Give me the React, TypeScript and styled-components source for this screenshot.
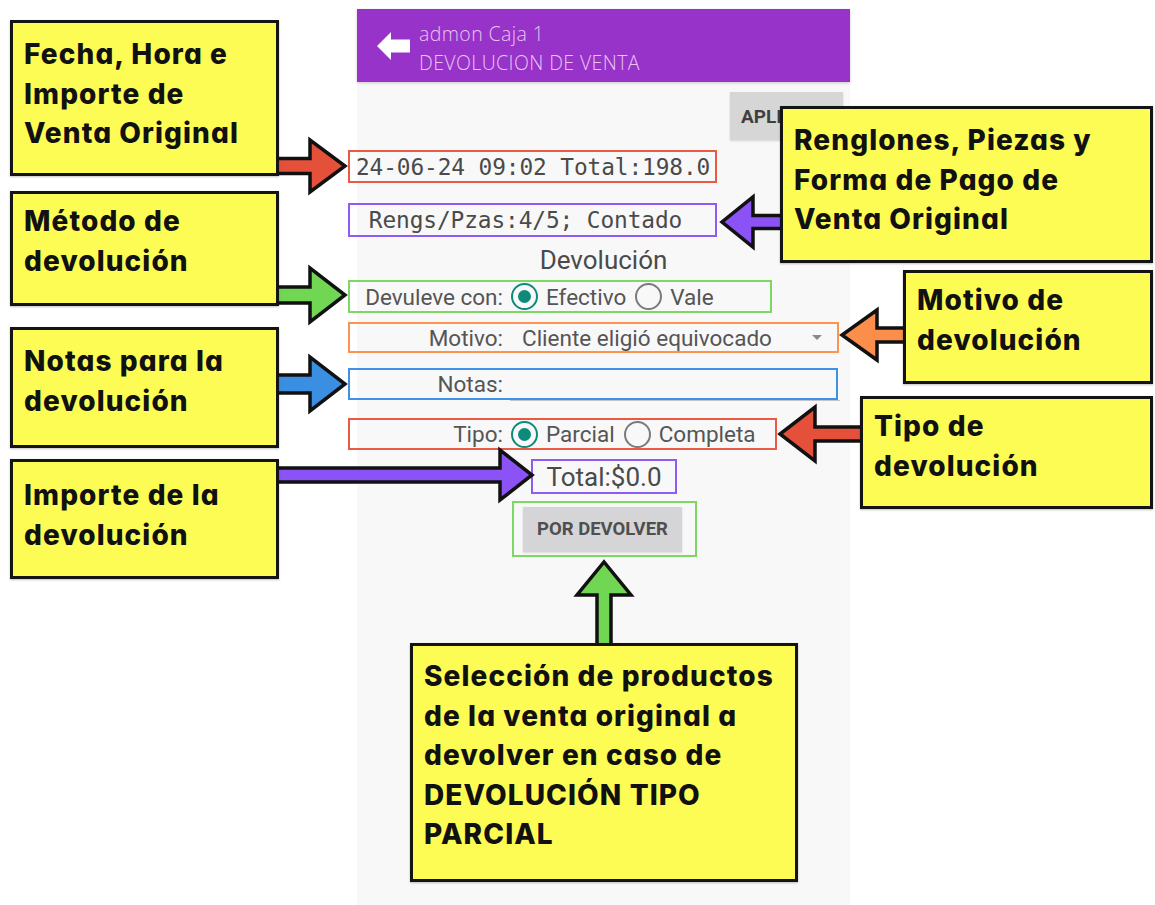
import React from "react";
import styled, { createGlobalStyle } from "styled-components";

const RED = "#e5503a";
const GREEN = "#72d655";
const BLUE = "#3b8fe2";
const PURPLE = "#8b52f6";
const ORANGE = "#fc8e4c";
const TEAL = "#0e8a7b";

const GlobalStyle = createGlobalStyle`
  html, body {
    margin: 0;
    padding: 0;
    background: #ffffff;
  }
`;

const Canvas = styled.div`
  position: relative;
  width: 1155px;
  height: 905px;
  overflow: hidden;
  background: #ffffff;
  font-family: Roboto, "Liberation Sans", sans-serif;
`;

const Phone = styled.div`
  margin-left: 357px;
  margin-top: 9px;
  width: 493px;
  height: 896px;
  background: #f8f8f8;
  display: flex;
  flex-direction: column;
  align-items: flex-start;
`;

const AppBar = styled.header`
  box-sizing: border-box;
  width: 100%;
  height: 73px;
  flex-shrink: 0;
  background: #9733c9;
  display: flex;
  align-items: center;
  padding-left: 20px;
  gap: 8px;
  box-shadow: 0 1px 3px rgba(0, 0, 0, 0.2);
`;

const BarTitles = styled.div`
  display: flex;
  flex-direction: column;
  padding-top: 4px;
  color: #eac3f1;
  font-family: "Open Sans", "Noto Sans", sans-serif;
  font-weight: 300;
  font-size: 19.5px;
  letter-spacing: 0.4px;
  line-height: 29px;
`;

const ApplyButton = styled.button`
  box-sizing: border-box;
  margin-left: 373px;
  margin-top: 10px;
  width: 113px;
  height: 48px;
  border: none;
  background: #d6d6d7;
  color: #3f3f3f;
  font-family: Roboto, sans-serif;
  font-weight: 700;
  font-size: 19px;
  text-align: left;
  padding-left: 11px;
  box-shadow: 0 1px 2px rgba(0, 0, 0, 0.15);
`;

const Frame = styled.div<{ $color: string; $x: number; $w: number; $h: number; $mt: number; $center?: boolean }>`
  box-sizing: border-box;
  margin-left: ${(p) => p.$x}px;
  margin-top: ${(p) => p.$mt}px;
  width: ${(p) => p.$w}px;
  height: ${(p) => p.$h}px;
  border: 2px solid ${(p) => p.$color};
  display: flex;
  align-items: center;
  justify-content: ${(p) => (p.$center ? "center" : "flex-start")};
  color: #555555;
`;

const MonoText = styled.span<{ $pl?: number; $pr?: number }>`
  font-family: "DejaVu Sans Mono", "Liberation Mono", monospace;
  font-size: 22.8px;
  letter-spacing: -0.1px;
  color: #4a4a4a;
  padding-left: ${(p) => p.$pl ?? 0}px;
  padding-right: ${(p) => p.$pr ?? 0}px;
  white-space: nowrap;
`;

const SectionTitle = styled.div`
  align-self: stretch;
  margin-top: 10px;
  text-align: center;
  font-size: 26px;
  line-height: 26px;
  color: #4a4a4a;
`;

const Label = styled.span`
  width: 153px;
  flex-shrink: 0;
  text-align: right;
  font-size: 22.5px;
  color: #555555;
  white-space: nowrap;
`;

const OptionText = styled.span`
  font-size: 22.5px;
  color: #555555;
  margin-right: 9px;
  white-space: nowrap;
`;

const Radio = styled.span<{ $on?: boolean }>`
  box-sizing: border-box;
  width: 27px;
  height: 27px;
  border-radius: 50%;
  border: 2.5px solid ${(p) => (p.$on ? TEAL : "#7a7a7a")};
  margin-right: 8px;
  display: flex;
  align-items: center;
  justify-content: center;
  flex-shrink: 0;

  &::after {
    content: "";
    width: 13px;
    height: 13px;
    border-radius: 50%;
    background: ${(p) => (p.$on ? TEAL : "transparent")};
  }
`;

const Options = styled.div`
  display: flex;
  align-items: center;
  margin-left: 8px;
`;

const SpinnerValue = styled.span`
  margin-left: 19px;
  font-size: 22.5px;
  color: #555555;
  white-space: nowrap;
`;

const SpinnerCaret = styled.span`
  margin-left: auto;
  margin-right: 15px;
  width: 0;
  height: 0;
  border-left: 5px solid transparent;
  border-right: 5px solid transparent;
  border-top: 5px solid #8a8a8a;
`;

const NoteInput = styled.span`
  align-self: flex-end;
  margin-left: 7px;
  margin-bottom: -3px;
  flex: 1;
  margin-right: -4px;
  height: 0;
  border-bottom: 1px solid #c4c4c4;
`;

const TotalText = styled.span`
  font-size: 26px;
  color: #4a4a4a;
`;

const ActionButton = styled.button`
  margin-left: 9px;
  width: 159px;
  height: 45px;
  border: none;
  background: #d5d5d8;
  color: #4f4f4f;
  font-family: Roboto, sans-serif;
  font-weight: 700;
  font-size: 18.5px;
  padding: 0;
  box-shadow: 0 1px 2px rgba(0, 0, 0, 0.12);
`;

const Callout = styled.div<{ $x: number; $y: number; $w: number; $h: number; $pt: number }>`
  position: absolute;
  z-index: 2;
  box-sizing: border-box;
  left: ${(p) => p.$x}px;
  top: ${(p) => p.$y}px;
  width: ${(p) => p.$w}px;
  height: ${(p) => p.$h}px;
  padding: ${(p) => p.$pt}px 4px 0 11px;
  background: #fdfc55;
  border: 3.5px solid #141414;
  box-shadow: 0 1px 2px rgba(0, 0, 0, 0.25);
  font-family: Inter, Lato, "Noto Sans", sans-serif;
  font-feature-settings: "cv11";
  font-weight: 800;
  font-size: 28px;
  line-height: 39.5px;
  letter-spacing: 1.1px;
  color: #111111;
  white-space: pre;
`;

const ArrowSvg = styled.svg<{ $x: number; $y: number }>`
  position: absolute;
  z-index: 1;
  left: ${(p) => p.$x}px;
  top: ${(p) => p.$y}px;
  overflow: visible;
`;

type Dir = "right" | "left" | "up";

interface ArrowSpec {
  dir: Dir;
  from: number;
  to: number;
  c: number;
  t: number;
  h: number;
  H: number;
  color: string;
}

const arrows: ArrowSpec[] = [
  { dir: "right", from: 272, to: 345, c: 166, t: 15, h: 35, H: 26, color: RED },
  { dir: "right", from: 272, to: 345, c: 295, t: 16, h: 35, H: 27, color: GREEN },
  { dir: "right", from: 272, to: 345, c: 384, t: 18, h: 35, H: 27, color: BLUE },
  { dir: "right", from: 272, to: 532, c: 475, t: 14, h: 32, H: 25, color: PURPLE },
  { dir: "left", from: 786, to: 722, c: 222, t: 13, h: 31, H: 25, color: PURPLE },
  { dir: "left", from: 909, to: 842, c: 335, t: 14, h: 35, H: 25, color: ORANGE },
  { dir: "left", from: 866, to: 780, c: 434, t: 14, h: 35, H: 27, color: RED },
  { dir: "up", from: 649, to: 562, c: 604, t: 14, h: 33, H: 27, color: GREEN },
];

const Arrow = ({ a }: { a: ArrowSpec }) => {
  const L = Math.abs(a.to - a.from);
  const half = a.t / 2;
  const local: [number, number][] = [
    [0, -half],
    [L - a.h, -half],
    [L - a.h, -a.H],
    [L, 0],
    [L - a.h, a.H],
    [L - a.h, half],
    [0, half],
  ];
  const pts = local.map(([u, v]) => {
    if (a.dir === "right") return [a.from + u, a.c + v];
    if (a.dir === "left") return [a.from - u, a.c + v];
    return [a.c + v, a.from - u];
  });
  const pad = 3;
  const minX = Math.min(...pts.map((p) => p[0])) - pad;
  const minY = Math.min(...pts.map((p) => p[1])) - pad;
  const maxX = Math.max(...pts.map((p) => p[0])) + pad;
  const maxY = Math.max(...pts.map((p) => p[1])) + pad;
  return (
    <ArrowSvg $x={minX} $y={minY} width={maxX - minX} height={maxY - minY}>
      <polygon
        points={pts.map(([x, y]) => `${x - minX},${y - minY}`).join(" ")}
        fill={a.color}
        stroke="#111"
        strokeWidth={3.5}
        strokeLinejoin="miter"
      />
    </ArrowSvg>
  );
};

const BackArrow = () => (
  <svg width="34" height="32" viewBox="0 0 34 32">
    <polygon points="0,16 14,2 14,9.5 33,9.5 33,22.5 14,22.5 14,30" fill="#ffffff" />
  </svg>
);

const callouts = [
  { x: 10, y: 20, w: 269, h: 156, pt: 12, text: "Fecha, Hora e\nImporte de\nVenta Original" },
  { x: 10, y: 191, w: 269, h: 115, pt: 8, text: "Método de\ndevolución" },
  { x: 10, y: 327, w: 269, h: 121, pt: 12, text: "Notas para la\ndevolución" },
  { x: 10, y: 459, w: 269, h: 120, pt: 14, text: "Importe de la\ndevolución" },
  { x: 780, y: 106, w: 373, h: 157, pt: 12, text: "Renglones, Piezas y\nForma de Pago de\nVenta Original" },
  { x: 903, y: 270, w: 250, h: 114, pt: 8, text: "Motivo de\ndevolución" },
  { x: 860, y: 396, w: 293, h: 113, pt: 8, text: "Tipo de\ndevolución" },
  {
    x: 410,
    y: 643,
    w: 388,
    h: 239,
    pt: 11,
    text: "Selección de productos\nde la venta original a\ndevolver en caso de\nDEVOLUCIÓN TIPO\nPARCIAL",
  },
];

export default function App() {
  return (
    <>
      <GlobalStyle />
      <Canvas>
        <Phone>
          <AppBar>
            <BackArrow />
            <BarTitles>
              <span>admon Caja 1</span>
              <span>DEVOLUCION DE VENTA</span>
            </BarTitles>
          </AppBar>

          <ApplyButton>APLICAR</ApplyButton>

          <Frame $color="#ea5944" $x={-9} $w={369} $h={33} $mt={10}>
            <MonoText $pl={6}>24-06-24 09:02 Total:198.0</MonoText>
          </Frame>

          <Frame $color="#8d5cf7" $x={-9} $w={369} $h={34} $mt={20} $center>
            <MonoText $pr={14}>Rengs/Pzas:4/5; Contado</MonoText>
          </Frame>

          <SectionTitle>Devolución</SectionTitle>

          <Frame $color="#7cd862" $x={-9} $w={424} $h={33} $mt={7}>
            <Label>Devuleve con:</Label>
            <Options>
              <Radio $on />
              <OptionText>Efectivo</OptionText>
              <Radio />
              <OptionText>Vale</OptionText>
            </Options>
          </Frame>

          <Frame $color="#fd9350" $x={-9} $w={491} $h={31} $mt={9}>
            <Label>Motivo:</Label>
            <SpinnerValue>Cliente eligió equivocado</SpinnerValue>
            <SpinnerCaret />
          </Frame>

          <Frame $color="#3f91e8" $x={-9} $w={490} $h={32} $mt={15}>
            <Label>Notas:</Label>
            <NoteInput />
          </Frame>

          <Frame $color="#ea5944" $x={-9} $w={429} $h={32} $mt={18}>
            <Label>Tipo:</Label>
            <Options>
              <Radio $on />
              <OptionText>Parcial</OptionText>
              <Radio />
              <OptionText>Completa</OptionText>
            </Options>
          </Frame>

          <Frame $color="#8d5cf7" $x={174} $w={146} $h={35} $mt={9} $center>
            <TotalText>Total:$0.0</TotalText>
          </Frame>

          <Frame $color="#7cd862" $x={155} $w={185} $h={56} $mt={7}>
            <ActionButton>POR DEVOLVER</ActionButton>
          </Frame>
        </Phone>

        {arrows.map((a, i) => (
          <Arrow key={i} a={a} />
        ))}

        {callouts.map((c, i) => (
          <Callout key={i} $x={c.x} $y={c.y} $w={c.w} $h={c.h} $pt={c.pt}>
            {c.text}
          </Callout>
        ))}
      </Canvas>
    </>
  );
}
